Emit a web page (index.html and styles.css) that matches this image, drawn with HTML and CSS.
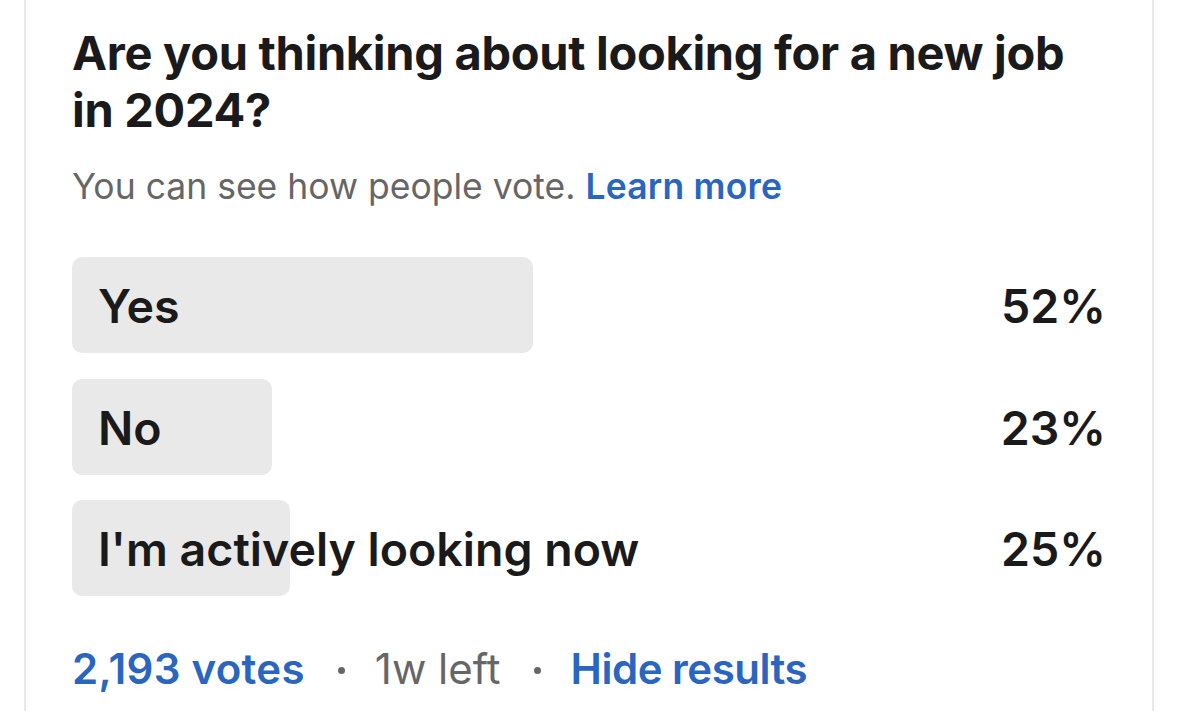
FILE: index.html
```html
<!DOCTYPE html>
<html lang="en">
<head>
<meta charset="utf-8">
<title>Poll</title>
<link rel="stylesheet" href="styles.css">
</head>
<body>
<div class="card">
  <h1 class="question">Are you thinking about looking for a new job in 2024?</h1>
  <p class="visibility">You can see how people vote. <a class="link" href="#">Learn more</a></p>
  <div class="options">
    <div class="option">
      <div class="track">
        <div class="fill" style="width:461px"></div>
        <span class="label">Yes</span>
      </div>
      <span class="pct">52%</span>
    </div>
    <div class="option">
      <div class="track">
        <div class="fill" style="width:200px"></div>
        <span class="label">No</span>
      </div>
      <span class="pct">23%</span>
    </div>
    <div class="option">
      <div class="track">
        <div class="fill" style="width:218px"></div>
        <span class="label">I'm actively looking now</span>
      </div>
      <span class="pct">25%</span>
    </div>
  </div>
  <div class="footer">
    <a class="link" href="#">2,193 votes</a>
    <span class="dot"></span>
    <span class="meta">1w left</span>
    <span class="dot"></span>
    <a class="link" href="#">Hide results</a>
  </div>
</div>
</body>
</html>
```
FILE: styles.css
```css
html, body {
  margin: 0;
  padding: 0;
  background: #ffffff;
}
body {
  font-family: Inter, "Noto Sans", sans-serif;
  color: #1a1a1a;
}
.card {
  margin-left: 24px;
  width: 1130px;
  box-sizing: border-box;
  min-height: 711px;
  border-left: 2px solid #e9e9e9;
  border-right: 2px solid #e9e9e9;
  padding: 24px 48px 0 46px;
}
.question {
  margin: 0;
  font-size: 47px;
  font-weight: 700;
  line-height: 57px;
  letter-spacing: -0.3px;
  color: #1a1a1a;
}
.visibility {
  margin: 27px 0 0;
  font-size: 35.5px;
  line-height: 44px;
  color: #666666;
  font-weight: 400;
}
.link {
  color: #2a66bf;
  font-weight: 600;
  text-decoration: none;
}
.visibility .link {
  letter-spacing: 0.2px;
}
.options {
  margin-top: 48px;
  display: flex;
  flex-direction: column;
  gap: 25.5px;
}
.option {
  display: flex;
  align-items: center;
  justify-content: space-between;
  height: 96px;
}
.track {
  position: relative;
  flex: 1;
  height: 96px;
  display: flex;
  align-items: center;
}
.fill {
  position: absolute;
  left: 0;
  top: 0;
  bottom: 0;
  background: #e9e9e9;
  border-radius: 10px;
}
.label {
  position: relative;
  padding-left: 26px;
  padding-top: 2px;
  font-size: 46.5px;
  font-weight: 600;
  color: #1a1a1a;
}
.pct {
  padding-top: 2px;
  margin-right: -2px;
  font-size: 46.5px;
  font-weight: 600;
  color: #1a1a1a;
}
.footer {
  margin-top: 49px;
  display: flex;
  align-items: center;
  font-size: 42px;
  line-height: 48px;
}
.footer .link:first-child {
  letter-spacing: 0.3px;
}
.footer .link:last-child {
  letter-spacing: -0.5px;
}
.dot {
  width: 7px;
  height: 7px;
  border-radius: 50%;
  background: #666666;
  margin: 2px 30px 0 33px;
}
.meta {
  color: #666666;
}
```
